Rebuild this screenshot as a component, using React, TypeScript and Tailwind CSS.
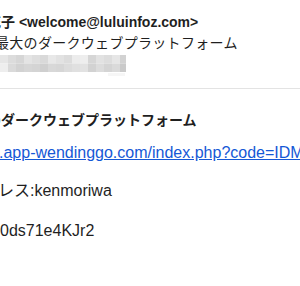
import React from 'react';

const blurRows = [
  ['#e6e6e6', '#dcdcdc', '#d6d6d6', '#e4e4e4', '#dedede', '#d9d9d9', '#e8e8e8', '#e2e2e2', '#dcdcdc', '#ececec', '#eeeeee', '#d6d6d6', '#e2e2e2', '#dddddd', '#e6e6e6', '#d2d2d2'],
  ['#eeeeee', '#dadada', '#d2d2d2', '#d6d6d6', '#d4d4d4', '#cfcfcf', '#d8d8d8', '#d6d6d6', '#dcdcdc', '#e0e0e0', '#e2e2e2', '#d2d2d2', '#dcdcdc', '#d4d4d4', '#dadada', '#cacaca'],
];

const BlurredRecipient: React.FC = () => (
  <svg width="126" height="22" viewBox="0 0 126 22" className="block">
    {blurRows.map((row, r) =>
      row.map((c, i) => <rect key={`${r}-${i}`} x={i * 8} y={r * 8.5} width="8" height="8.5" fill={c} />)
    )}
    <rect x="108" y="18" width="17" height="3" fill="#f6f6f6" />
  </svg>
);

export default function App() {
  return (
    <div
      className="w-[300px] h-[286px] overflow-hidden bg-white text-[#1f1f1f]"
      style={{ fontFamily: '"Liberation Sans", "Noto Sans CJK JP", sans-serif' }}
    >
      {/* header */}
      <div className="pt-[12px]">
        <div className="-ml-[13px] h-[20px] leading-[20px] text-[14px] font-bold whitespace-nowrap">
          花子 &lt;welcome@luluinfoz.com&gt;
        </div>
        <div className="-ml-[5px] mt-[1px] h-[20px] text-sm leading-[20px] tracking-[0.3px] whitespace-nowrap">
          最大のダークウェブプラットフォーム
        </div>
        <div className="mt-[2px]">
          <BlurredRecipient />
        </div>
      </div>

      <div className="mt-[11px] h-px bg-[#e3e3e3]" />

      {/* body */}
      <div className="text-[16px]">
        <p className="-ml-[13px] mt-[21px] h-[20px] leading-[20px] text-[14px] font-bold whitespace-nowrap">
          のダークウェブプラットフォーム
        </p>
        <p className="-ml-[1px] mt-[13px] h-[20px] leading-[20px] whitespace-nowrap">
          <a href="#" className="text-[#1558d6] underline">
            .app-wendinggo.com/index.php?code=IDM5kq
          </a>
        </p>
        <p className="-ml-[18px] mt-[18px] h-[20px] leading-[20px] whitespace-nowrap">ドレス:kenmoriwa</p>
        <p className="mt-[20px] h-[20px] leading-[20px] whitespace-nowrap">0ds71e4KJr2</p>
      </div>
    </div>
  );
}
